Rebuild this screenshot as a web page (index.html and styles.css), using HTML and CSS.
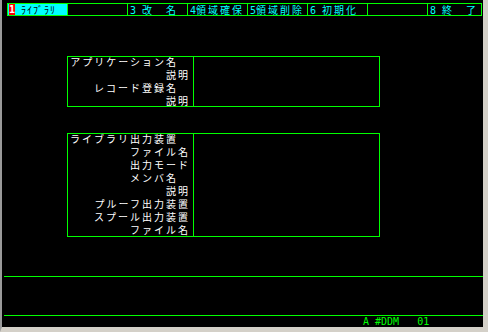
FILE: index.html
```html
<!DOCTYPE html>
<html lang="ja">
<head>
    <meta charset="UTF-8">
    <title>ライブラリ</title>
    <link rel="stylesheet" href="styles.css">
</head>
<body>
    <div class="screen">
        <!-- ファンクションキー -->
        <div class="menu">
            <div class="cell active"><span class="fkey">1</span><span class="hw">ﾗｲﾌﾞﾗﾘ</span></div>
            <div class="cell"></div>
            <div class="cell"><span class="k2">3</span>改　名</div>
            <div class="cell"><span class="k1">4</span>領域確保</div>
            <div class="cell"><span class="k1">5</span>領域削除</div>
            <div class="cell"><span class="k2">6</span>初期化</div>
            <div class="cell"></div>
            <div class="cell last"><span class="k2">8</span>終　了</div>
        </div>

        <!-- アプリケーション -->
        <div class="box box-app">
            <div class="labels">
                <div class="row">アプリケーション名　</div>
                <div class="row">説明</div>
                <div class="row">レコード登録名　</div>
                <div class="row">説明</div>
            </div>
            <div class="values"></div>
        </div>

        <!-- 出力装置 -->
        <div class="box box-out">
            <div class="labels">
                <div class="row">ライブラリ出力装置　</div>
                <div class="row">ファイル名</div>
                <div class="row">出力モード</div>
                <div class="row">メンバ名　</div>
                <div class="row">説明</div>
                <div class="row">プルーフ出力装置</div>
                <div class="row">スプール出力装置</div>
                <div class="row">ファイル名</div>
            </div>
            <div class="values"></div>
        </div>

        <div class="rule rule-top"></div>
        <div class="message"></div>
        <div class="rule"></div>
        <div class="status">A #DDM   01</div>
    </div>
</body>
</html>
```

FILE: styles.css
```css
body {
    margin: 0;
    background: #000;
}
.screen {
    width: 488px;
    height: 332px;
    box-sizing: border-box;
    background: #000;
    border-left: 2px solid #9a9a9a;
    border-right: 5px solid #d4d0c8;
    border-bottom: 5px solid #d4d0c8;
    font-family: "Noto Sans CJK JP", sans-serif;
    font-size: 10px;
    letter-spacing: 2px;
    overflow: hidden;
}
.menu {
    display: flex;
    width: 475px;
    height: 13px;
    box-sizing: border-box;
    margin: 3px 0 0 5px;
    border: 1px solid #00ff00;
}
.cell {
    width: 60px;
    box-sizing: border-box;
    border-right: 1px solid #00ff00;
    color: #00ffff;
    line-height: 11px;
    padding-left: 2px;
    white-space: pre;
}
.cell.last {
    width: 53px;
    border-right: none;
}
.cell.active {
    background: #00ffff;
    color: #000;
    padding-left: 1px;
}
.fkey {
    display: inline-block;
    width: 6px;
    height: 11px;
    margin-right: 6px;
    background: #ff0000;
    color: #fff;
    font-family: "DejaVu Sans Mono", monospace;
    font-size: 10px;
    font-weight: bold;
    letter-spacing: 0;
    text-align: center;
    vertical-align: top;
}
.hw {
    letter-spacing: 1px;
}
.k1, .k2 {
    display: inline-block;
    font-family: "DejaVu Sans Mono", monospace;
    font-size: 10px;
    letter-spacing: 0;
}
.k1 { width: 6px; }
.k2 { width: 12px; }
.box {
    display: flex;
    width: 313px;
    box-sizing: border-box;
    margin-left: 65px;
    border: 1px solid #00ff00;
}
.box-app {
    height: 51px;
    margin-top: 40px;
}
.box-out {
    height: 104px;
    margin-top: 26px;
}
.labels {
    width: 126px;
    box-sizing: border-box;
    border-right: 1px solid #00ff00;
    padding-right: 3px;
    color: #fff;
}
.row {
    height: 13px;
    line-height: 13px;
    text-align: right;
    white-space: pre;
}
.row:first-child {
    margin-top: -2px;
}
.values {
    flex: 1;
}
.rule {
    height: 1px;
    margin-left: 2px;
    background: #00ff00;
}
.rule-top {
    margin-top: 39px;
}
.message {
    height: 38px;
}
.status {
    padding-left: 361px;
    color: #00ff00;
    font-family: "DejaVu Sans Mono", monospace;
    font-size: 10px;
    letter-spacing: 0;
    line-height: 11px;
    white-space: pre;
}
```
